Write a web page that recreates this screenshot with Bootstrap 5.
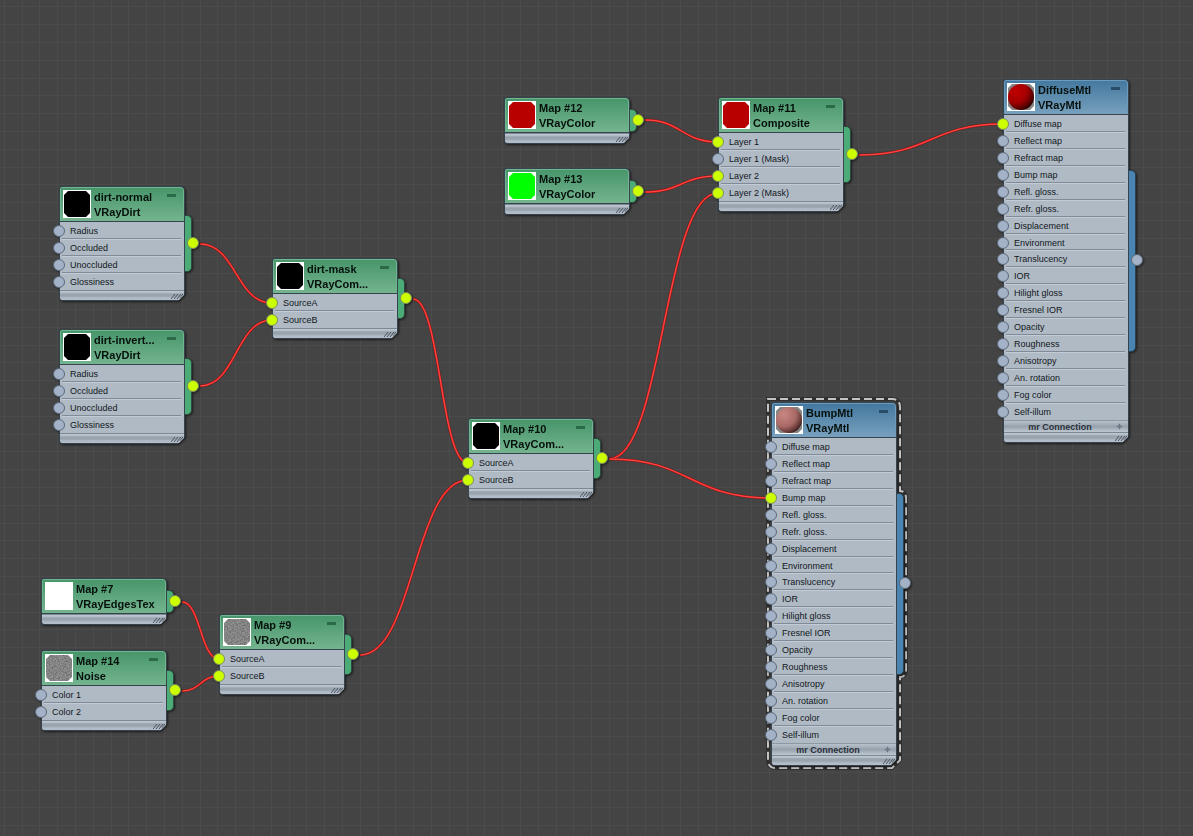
<!DOCTYPE html>
<html lang="en">
<head>
<meta charset="utf-8">
<meta name="viewport" content="width=device-width, initial-scale=1">
<title>Material node editor</title>
<link href="https://cdn.jsdelivr.net/npm/bootstrap@5.3.0/dist/css/bootstrap.min.css" rel="stylesheet">
<style>
  body { background: #444; font-family: "Liberation Sans", Arial, sans-serif; color: #10161c; }

  /* grid tile: five cells, slightly uneven so that the cell size averages under 18px */
  .graph {
    background-color: #444;
    background-image: url("data:image/svg+xml,%3Csvg xmlns='http://www.w3.org/2000/svg' width='89' height='89' fill='%234b4b4b'%3E%3Cpath d='M4 0h1v89h-1zM22 0h1v89h-1zM39 0h1v89h-1zM57 0h1v89h-1zM75 0h1v89h-1zM0 6h89v1H0zM0 24h89v1H0zM0 42h89v1H0zM0 60h89v1H0zM0 78h89v1H0z'/%3E%3C/svg%3E");
  }

  .gnode { width: 126px; filter: drop-shadow(1px 1px 1px rgba(0,0,0,.6)); }
  .gnode-shell {
    padding: 1px;
    background: #364450;
    border-radius: 3px 5px 0 4px;
    clip-path: polygon(0 0, 100% 0, 100% calc(100% - 7px), calc(100% - 7px) 100%, 0 100%);
  }
  .gnode-head {
    height: 34px; padding: 2px;
    border-radius: 2px 4px 0 0;
    background: linear-gradient(#48966b, #74b48f);
    border: solid #6fb58d; border-width: 1px 1px 0 1px;
    margin-bottom: 1px;
  }
  .gnode.mtl .gnode-head { background: linear-gradient(#45799f, #77a0bd); border-color: #6c9cbd; }
  .thumb { width: 28px; height: 28px; }
  .gnode-title { font-size: 11px; line-height: 15px; font-weight: 700; margin: 0; padding-left: 3px; white-space: nowrap; color: #06100c; }
  .fold { width: 9px; height: 3px; background: #2b6a49; top: 6px; right: 7px; }
  .gnode.mtl .fold { background: #274d68; }

  .gnode-main { background: #b0bac4; border-radius: 0 0 0 3px; }
  .slots { font-size: 9px; line-height: 18px; }
  .slot-row { height: 17px; margin: 0 3px 0 2px; padding-left: 8px; white-space: nowrap; border-bottom: 1px solid #808b97; }
  .slot-row + .slot-row { background: linear-gradient(#c3ccd6, #c3ccd6) top / 100% 1px no-repeat; }
  .slot-row:last-child { border-color: transparent; }
  .slot-row:nth-child(8) { height: 16px; }

  .extra {
    height: 12px; font-size: 9px; line-height: 13px; font-weight: 700; color: #2a3038;
    border-top: 1px solid #8d98a3;
    background: linear-gradient(#b8c2cb, #97a2ae 50%, #bdc7d0);
  }
  .extra-label { padding-right: 12px; }
  .extra-plus { width: 7px; height: 7px; right: 5px; top: 2px; }
  .gnode-foot {
    height: 10px; border-top: 1px solid #7b8793;
    background: linear-gradient(#bcc6cf 1px, #98a3ae 3px, #98a3ae 5px, #b2bcc8 7px);
    clip-path: polygon(0 0, 100% 0, 100% calc(100% - 6px), calc(100% - 6px) 100%, 0 100%);
    border-radius: 0 0 0 3px;
  }
  .grip { width: 12px; height: 6px; right: 1px; top: 2px; }

  .tab { left: 125px; top: 25%; width: 8px; height: 50%; background: #4cac78; border: 1px solid #2f4a40; border-left: 0; border-radius: 0 5px 5px 0; }
  .gnode.mtl .tab { background: #4a84b0; border-color: #2a4152; }
  .pin { width: 12px; height: 12px; border-radius: 50%; background: #a3b2c6; border: 1px solid #5b6878; }
  .pin.linked { background: #ccff00; border-color: #7c8a63; }
  .pin-out { left: 128px; top: 50%; margin-top: -7px; }
  .pin-in { left: -6px; }

  .wire-edge { stroke: #3a2222; stroke-width: 3; opacity: .5; }
  .wire-core { stroke: #f01414; stroke-width: 2; }
  .wire-shine { stroke: #ff8a80; stroke-width: 1; opacity: .5; }
</style>
</head>
<body>
<main id="graph" class="graph position-relative min-vh-100 overflow-hidden">
  <svg class="position-absolute top-0 start-0 w-100 h-100" aria-hidden="true" fill="none">
    <defs>
      <filter id="grain" x="0" y="0" width="1" height="1" color-interpolation-filters="sRGB">
        <feTurbulence type="fractalNoise" baseFrequency=".7" numOctaves="2" seed="4"/>
        <feColorMatrix values=".35 0 0 0 .34  .35 0 0 0 .34  .35 0 0 0 .34  0 0 0 0 1"/>
        <feComposite in2="SourceGraphic" operator="in"/>
      </filter>
      <radialGradient id="redball" cx=".3" cy=".28" r=".85"><stop offset="0" stop-color="#c00000"/><stop offset=".5" stop-color="#a40000"/><stop offset=".75" stop-color="#600"/><stop offset="1" stop-color="#100"/></radialGradient>
      <radialGradient id="pinkball" cx=".3" cy=".28" r=".85"><stop offset="0" stop-color="#c98783"/><stop offset=".55" stop-color="#a86a66"/><stop offset=".8" stop-color="#6a3c3a"/><stop offset="1" stop-color="#211"/></radialGradient>
    </defs>
    <g id="wires"></g>
    <g stroke-width="2">
      <path stroke="#303030" stroke-width="4" d="M768 399H892Q900 399 900 407V491Q906 491 906 499V669Q906 677 900 677V760L892 768H776Q768 768 768 760Z"/>
      <path stroke="#c4c4c4" stroke-dasharray="8 4" d="M768 399H892Q900 399 900 407V491Q906 491 906 499V669Q906 677 900 677V760L892 768H776Q768 768 768 760Z"/>
    </g>
  </svg>
</main>

<script>
const mtl = ["Diffuse map","Reflect map","Refract map","Bump map","Refl. gloss.","Refr. gloss.","Displacement","Environment","Translucency","IOR","Hilight gloss","Fresnel IOR","Opacity","Roughness","Anisotropy","An. rotation","Fog color","Self-illum"];
const dirt = ["Radius","Occluded","Unoccluded","Glossiness"];
const src = ["SourceA","SourceB"];
// on: indexes of the connected inputs
const nodes = [
  {x:59,  y:186, name:"dirt-normal",    type:"VRayDirt",     fill:"#000", slots:dirt, on:[], out:1},
  {x:59,  y:329, name:"dirt-invert...", type:"VRayDirt",     fill:"#000", slots:dirt, on:[], out:1},
  {x:272, y:258, name:"dirt-mask",      type:"VRayCom...",   fill:"#000", slots:src, on:[0,1], out:1},
  {x:468, y:418, name:"Map #10",        type:"VRayCom...",   fill:"#000", slots:src, on:[0,1], out:1},
  {x:504, y:97,  name:"Map #12",        type:"VRayColor",    fill:"#b80000", slots:[], on:[], out:1},
  {x:504, y:168, name:"Map #13",        type:"VRayColor",    fill:"#00ff00", slots:[], on:[], out:1},
  {x:718, y:97,  name:"Map #11",        type:"Composite",    fill:"#b80000", slots:["Layer 1","Layer 1 (Mask)","Layer 2","Layer 2 (Mask)"], on:[0,2,3], out:1},
  {x:41,  y:578, name:"Map #7",         type:"VRayEdgesTex", fill:"#fff", slots:[], on:[], out:1},
  {x:41,  y:650, name:"Map #14",        type:"Noise",        fill:"grain", slots:["Color 1","Color 2"], on:[], out:1},
  {x:219, y:614, name:"Map #9",         type:"VRayCom...",   fill:"grain", slots:src, on:[0,1], out:1},
  {x:1003,y:79,  name:"DiffuseMtl",     type:"VRayMtl",      ball:"redball",  slots:mtl, on:[0]},
  {x:771, y:402, name:"BumpMtl",        type:"VRayMtl",      ball:"pinkball", slots:mtl, on:[3]}
];
const wires = [
  [200,244,272,303],[200,386,272,320],[413,299,468,463],[360,655,468,480],
  [645,120,718,142],[645,192,718,176],[609,459,718,193],[609,459,771,498],
  [859,155,1003,124],[182,602,219,659],[182,691,219,676]
];

function thumb(n) {
  const oct = "M5 1H23L27 5V23L23 27H5L1 23V5Z";
  const art = n.ball
    ? `<path d="${oct}" fill="#858585"/><circle cx="14" cy="14" r="13" fill="url(#${n.ball})"/>`
    : `<path d="${oct}" fill="${n.fill === "grain" ? "#888" : n.fill}" ${n.fill === "grain" ? 'filter="url(#grain)"' : ""}/>`;
  return `<svg class="thumb flex-shrink-0" viewBox="0 0 28 28" aria-hidden="true"><path fill="#fff" d="M0 0h28v28H0z"/>${art}</svg>`;
}

function nodeHtml(n) {
  return `<article class="gnode position-absolute ${n.ball ? "mtl" : ""}" style="left:${n.x}px;top:${n.y}px">
    <div class="tab position-absolute"></div>
    <div class="gnode-shell">
      <header class="gnode-head d-flex position-relative">
        ${thumb(n)}
        <h2 class="gnode-title">${n.name}<br>${n.type}</h2>
        ${n.slots.length ? '<button type="button" class="fold position-absolute border-0 p-0" aria-label="Collapse"></button>' : ""}
      </header>
      <div class="gnode-main">
        <ul class="slots list-unstyled m-0">${n.slots.map(s => `<li class="slot-row">${s}</li>`).join("")}</ul>
        ${n.ball ? '<div class="extra position-relative text-center"><span class="extra-label">mr Connection</span><svg class="extra-plus position-absolute" viewBox="0 0 7 7" aria-hidden="true"><path d="M3 1h1v2h2v1H4v2H3V4H1V3h2z" fill="#6b7783" stroke="#6b7783" stroke-width=".5"/></svg></div>' : ""}
        <div class="gnode-foot position-relative"><svg class="grip position-absolute" viewBox="0 0 12 6" aria-hidden="true"><path d="M0 6L4 1M3 6L7 1M6 6L10 1M9 5L12 1" stroke="#4a535d" fill="none"/></svg></div>
      </div>
    </div>
    ${n.slots.map((s, i) => `<span class="pin pin-in position-absolute ${n.on.includes(i) ? "linked" : ""}" style="top:${39 + 17 * i - (i > 7 ? 1 : 0)}px"></span>`).join("")}
    <span class="pin pin-out position-absolute ${n.out ? "linked" : ""}"></span>
  </article>`;
}

document.getElementById("graph").insertAdjacentHTML("beforeend", nodes.map(nodeHtml).join(""));
document.getElementById("wires").innerHTML = wires.map(([a, b, c, d]) => {
  const m = (a + c) / 2, p = `M${a} ${b}C${m} ${b} ${m} ${d} ${c} ${d}`;
  return ["edge", "core", "shine"].map(k => `<path class="wire-${k}" d="${p}"/>`).join("");
}).join("");
</script>
<script src="https://cdn.jsdelivr.net/npm/bootstrap@5.3.0/dist/js/bootstrap.bundle.min.js"></script>
</body>
</html>
